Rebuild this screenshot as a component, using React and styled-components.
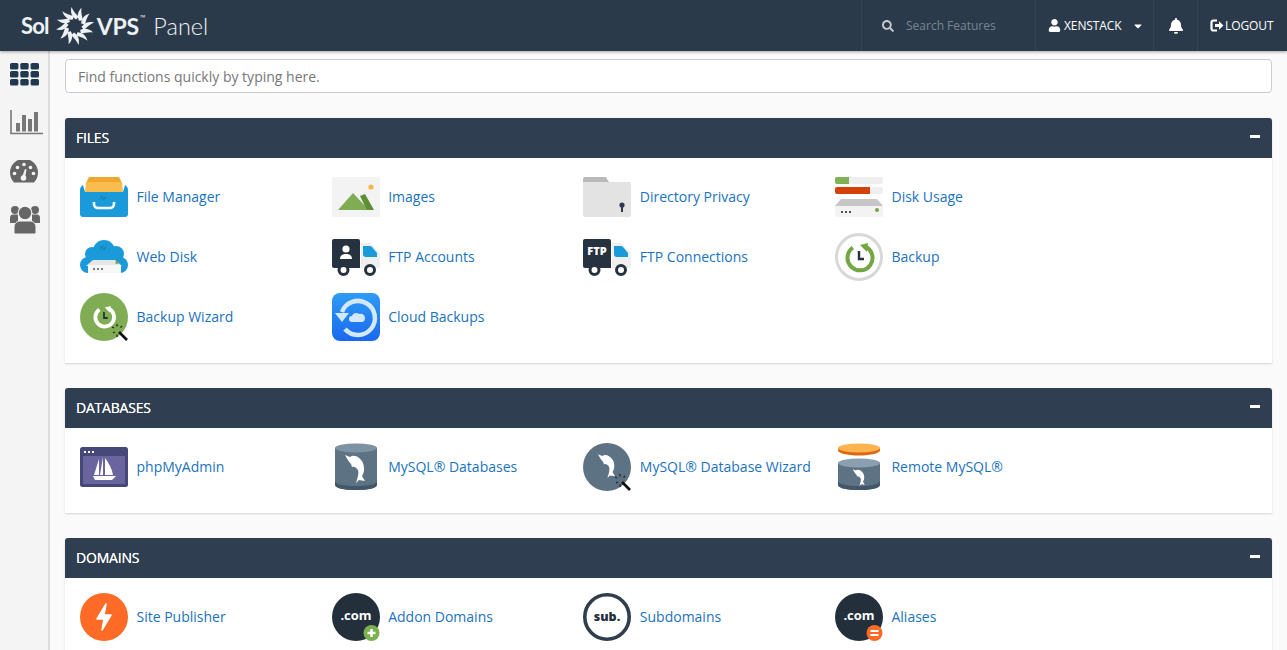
import React from 'react'
import styled, { createGlobalStyle } from 'styled-components'
import { FaSearch, FaUser, FaBell, FaCaretDown } from 'react-icons/fa'

const GlobalStyle = createGlobalStyle`
  html, body {
    margin: 0;
    height: 100%;
    overflow: hidden;
    background: #fafafa;
    font-family: 'Open Sans', 'Liberation Sans', sans-serif;
  }
`
const Page = styled.div`
  height: 100vh;
  display: flex;
  flex-direction: column;
  overflow: hidden;
`
const Header = styled.header`
  flex: 0 0 51px;
  height: 51px;
  box-sizing: border-box;
  display: flex;
  align-items: stretch;
  background: #2b3a4b;
  box-shadow: 0 1px 3px rgba(0, 0, 0, 0.35);
  z-index: 2;
  color: #fff;
`
const Logo = styled.div`
  flex: 1;
  display: flex;
  align-items: center;
  padding-left: 21px;
  color: #eef1f3;
`
const LogoWord = styled.span`
  font-family: 'Lato', sans-serif;
  font-weight: 700;
  font-size: ${(p) => p.$size || 22}px;
  letter-spacing: ${(p) => p.$track || 0}px;
`
const LogoTm = styled.sup`
  font-size: 7px;
  align-self: flex-start;
  margin: 14px 0 0 1px;
  line-height: 1;
`
const LogoPanel = styled.span`
  font-family: 'Lato', sans-serif;
  font-weight: 300;
  font-size: 23.5px;
  margin-left: 8px;
`
const HeaderCell = styled.div`
  width: ${(p) => p.$w}px;
  box-sizing: border-box;
  display: flex;
  align-items: center;
  padding-left: ${(p) => p.$pad}px;
  border-left: 1px solid #334355;
  font-size: 12px;
  letter-spacing: -0.1px;
`
const SearchText = styled.span`
  margin-left: 12px;
  font-size: 12px;
  letter-spacing: 0;
  color: #78858f;
`
const Caret = styled(FaCaretDown)`
  margin-left: 10px;
  font-size: 12px;
`
const Body = styled.div`
  flex: 1;
  display: flex;
  min-height: 0;
`
const Sidebar = styled.nav`
  flex: 0 0 50px;
  box-sizing: border-box;
  background: #f4f4f4;
  border-right: 2px solid #dcdcdc;
  display: flex;
  flex-direction: column;
`
const SideItem = styled.div`
  height: ${(p) => p.$h || 49}px;
  display: flex;
  align-items: center;
  padding-left: 10px;
`
const Main = styled.main`
  flex: 1;
  min-width: 0;
  padding: 8px 15px 0;
  background: #fafafa;
`
const QuickFind = styled.input`
  display: block;
  width: 100%;
  height: 34px;
  box-sizing: border-box;
  padding: 0 12px;
  border: 1px solid #ccc;
  border-radius: 4px;
  background: #fff;
  font-family: inherit;
  font-size: 14px;
  &::placeholder {
    color: #777;
    opacity: 1;
  }
`
const Panel = styled.section`
  margin-top: 25px;
  background: #fff;
  border-radius: 3px 3px 0 0;
  box-shadow: 0 1px 2px rgba(0, 0, 0, 0.15);
`
const PanelHead = styled.div`
  height: 40px;
  box-sizing: border-box;
  display: flex;
  align-items: center;
  justify-content: space-between;
  padding: 0 12px 2px 11px;
  background: #2f3e50;
  border-radius: 3px 3px 0 0;
  color: #fff;
  font-size: 14px;
  text-shadow: 0 0 0.6px #fff;
  letter-spacing: -0.2px;
  text-transform: uppercase;
`
const Collapse = styled.span`
  width: 10px;
  height: 3px;
  margin-bottom: 2px;
  background: #fff;
`
const PanelBody = styled.div`
  display: grid;
  grid-template-columns: repeat(4, 251.67px);
  grid-auto-rows: 60px;
  padding: 9px 15px 16px;
`
const Item = styled.a`
  display: flex;
  align-items: center;
  gap: 8.5px;
  color: #1b72be;
  font-size: 14px;
  white-space: nowrap;
`
const ItemLabel = styled.span`
  padding-bottom: 2px;
`
const Icon = styled.svg`
  flex: 0 0 48px;
  width: 48px;
  height: 48px;
`

const Swirl = () => (
  <svg width="40" height="38" viewBox="-20 -19 40 38" style={{ margin: '0 2px 0 6px' }}>
    {Array.from({ length: 12 }).map((_, i) => (
      <path
        key={i}
        d="M1 -6.500 C-3 -9 -5 -13.500 -3.500 -19 C-2 -15 1 -12 4 -9 C3 -8.400 2 -7.500 1 -6.500 Z"
        fill="#eef1f3"
        transform={`rotate(${i * 30})`}
      />
    ))}
  </svg>
)

const LogoutGlyph = () => (
  <svg width="14" height="13" viewBox="0 0 14 13" style={{ marginRight: 1 }}>
    <path d="M7 1.500H3.500A2 2 0 0 0 1.500 3.500v6a2 2 0 0 0 2 2H7" fill="none" stroke="#fff" strokeWidth="2.200" />
    <path d="M5 5h4V2.200l4.500 4.300L9 10.800V8H5z" fill="#fff" />
  </svg>
)

const GridGlyph = () => (
  <svg width="29" height="23" viewBox="0 0 29 23">
    {[0, 1, 2].map((r) =>
      [0, 1, 2].map((c) => (
        <rect key={`${r}${c}`} x={c * 10.3} y={r * 8} width="8.4" height="6.6" rx="1.6" fill="#22384f" />
      )),
    )}
  </svg>
)

const ChartGlyph = () => (
  <svg width="33" height="25" viewBox="0 0 33 25">
    <path d="M1 0v23.500h32" fill="none" stroke="#777" strokeWidth="1.600" />
    <rect x="6" y="13" width="4" height="8.500" fill="#777" />
    <rect x="12" y="5" width="4" height="16.500" fill="#777" />
    <rect x="18" y="9" width="4" height="12.500" fill="#777" />
    <rect x="24" y="2" width="4" height="19.500" fill="#777" />
  </svg>
)

const GaugeGlyph = () => (
  <svg width="28" height="23" viewBox="0 0 28 23">
    <path d="M4 22.500A14 14 0 1 1 24 22.500z" fill="#666" />
    {[
      [4.5, 13.5],
      [7.5, 7.5],
      [14, 4.5],
      [20.5, 7.5],
      [23.5, 13.5],
    ].map(([cx, cy]) => (
      <circle key={cx} cx={cx} cy={cy} r="1.8" fill="#f4f4f4" />
    ))}
    <path d="M12 17l3-8 1.500 .5-1.500 9z" fill="#f4f4f4" />
    <circle cx="13.500" cy="18" r="2.800" fill="#f4f4f4" />
  </svg>
)

const UsersGlyph = () => (
  <svg width="30" height="29" viewBox="0 0 30 29">
    <circle cx="5" cy="5" r="4" fill="#666" />
    <circle cx="25" cy="5" r="4" fill="#666" />
    <path d="M0 18v-5c0-2 1-3.500 3-3.500h5v8.500z" fill="#666" />
    <path d="M30 18v-5c0-2-1-3.500-3-3.500h-5v8.500z" fill="#666" />
    <circle cx="15" cy="8" r="6.800" fill="#666" stroke="#f4f4f4" strokeWidth="1.200" />
    <path d="M4 28v-6c0-3.500 3-6 6-6h10c3 0 6 2.500 6 6v6a1 1 0 0 1-1 1H5a1 1 0 0 1-1-1z" fill="#666" stroke="#f4f4f4" strokeWidth="1" />
  </svg>
)

const Dolphin = ({ transform }) => (
  <path
    transform={transform}
    fill="#fff"
    d="M13 12 L18 14 C22 11 28 14 31 20 C33 26 32 30 30 33 L33 38 L27 37 L24 40 C26 34 27 30 26 27 C24 24 22 23 20 24 L19 21 C17 19 15 16 13 12 Z"
  />
)

const Wand = () => (
  <g>
    <path d="M39 39 L47 47" stroke="#111" strokeWidth="2.600" />
    <path d="M32 34l2 1M37 31v2.500M42 33l-1.500 1.500M33 40l2-1M37 44v-2.500" stroke="#222" strokeWidth="1.300" />
  </g>
)

const Truck = ({ children }) => (
  <>
    <path d="M29 10h9l8 8c2 2 2 4 2 7v8a2 2 0 0 1-2 2H29z" fill="#efefef" />
    <path d="M31 13h7a3 3 0 0 1 2 1l5 6v4H34a3 3 0 0 1-3-3z" fill="#1a9ad8" />
    <path d="M2 6h24a2 2 0 0 1 2 2v27H2a2 2 0 0 1-2-2V8a2 2 0 0 1 2-2z" fill="#26323f" />
    <circle cx="11.500" cy="37" r="4.500" fill="#fff" stroke="#26323f" strokeWidth="3" />
    <circle cx="38" cy="37" r="4.500" fill="#fff" stroke="#26323f" strokeWidth="3" />
    {children}
  </>
)

const ComIcon = ({ color, mark }) => (
  <Icon viewBox="0 0 48 48">
    <circle cx="24" cy="24" r="24" fill="#232f3b" />
    <text x="24" y="27" textAnchor="middle" fontFamily="Open Sans" fontWeight="700" fontSize="13" fill="#fff">
      .com
    </text>
    <circle cx="39.500" cy="40" r="8" fill={color} />
    {mark}
  </Icon>
)

const FileManagerIcon = () => (
  <Icon viewBox="0 0 48 48">
    <path d="M9 4h30l3 6H6z" fill="#f0a72e" />
    <path d="M6 9h36l1 11H5z" fill="#f8bc4f" />
    <path d="M0 17c0-2 1-4 3-5l2 7h38l2-7c2 1 3 3 3 5v24a3 3 0 0 1-3 3H3a3 3 0 0 1-3-3z" fill="#1a9ad8" />
    <path d="M14 29v2a4 4 0 0 0 4 4h12a4 4 0 0 0 4-4v-2" fill="none" stroke="#fff" strokeWidth="2.600" />
    <path d="M20 26l3-3M23 27l3-3" stroke="#1587be" strokeWidth="2" />
  </Icon>
)
const ImagesIcon = () => (
  <Icon viewBox="0 0 48 48">
    <rect y="4" width="48" height="40" rx="1.500" fill="#f3f3f3" />
    <circle cx="39" cy="14" r="2.600" fill="#f7b54a" />
    <path d="M6 37L21 20l16 17z" fill="#80ad53" />
    <path d="M28 23l5-2 9 16h-7z" fill="#5f8f34" />
  </Icon>
)
const DirectoryIcon = () => (
  <Icon viewBox="0 0 48 48">
    <path d="M0 6a2 2 0 0 1 2-2h21l4 7H0z" fill="#b9b9b9" />
    <path d="M0 9h46a2 2 0 0 1 2 2v31a2 2 0 0 1-2 2H2a2 2 0 0 1-2-2z" fill="#e3e3e3" />
    <circle cx="39" cy="32" r="2.600" fill="#2b3a4b" />
    <rect x="38" y="32" width="2" height="7" fill="#2b3a4b" />
  </Icon>
)
const DiskUsageIcon = () => (
  <Icon viewBox="0 0 48 48">
    <rect y="4" width="48" height="7" rx="2" fill="#efefef" />
    <path d="M2 4h12v7H2a2 2 0 0 1-2-2V6a2 2 0 0 1 2-2z" fill="#80b254" />
    <rect y="14" width="48" height="7" rx="2" fill="#efefef" />
    <path d="M2 14h33v7H2a2 2 0 0 1-2-2v-3a2 2 0 0 1 2-2z" fill="#d4420c" />
    <path d="M6 26h36l6 7H0z" fill="#c6c6c6" />
    <path d="M0 33h48v9a2 2 0 0 1-2 2H2a2 2 0 0 1-2-2z" fill="#f3f3f3" />
    <circle cx="42" cy="37" r="2" fill="#73a644" />
    <path d="M6 39h2M10 39h2M14 39h2" stroke="#4a5560" strokeWidth="2" />
  </Icon>
)
const WebDiskIcon = () => (
  <Icon viewBox="0 0 48 48">
    <g fill="#1a9ad8">
      <circle cx="24" cy="18" r="11" />
      <circle cx="12" cy="21" r="7" />
      <circle cx="36" cy="21" r="8" />
      <circle cx="8" cy="32" r="8" />
      <circle cx="40" cy="32" r="8" />
      <rect x="8" y="20" width="32" height="20" />
    </g>
    <path d="M13 27h22l7 6H6z" fill="#e6e6e6" />
    <rect x="8" y="32" width="33" height="8" fill="#f7f7f7" />
    <circle cx="37" cy="29.500" r="1.600" fill="#73a644" />
    <path d="M13 36h2M17 36h2M21 36h2" stroke="#4a5560" strokeWidth="1.600" />
    <path d="M20 16l3-3M23 17l3-3" stroke="#1587be" strokeWidth="2" />
  </Icon>
)
const FtpAccountsIcon = () => (
  <Icon viewBox="0 0 48 48">
    <Truck>
      <circle cx="14" cy="16" r="3.600" fill="#fff" />
      <path d="M8 26c0-4 3-5 6-5s6 1 6 5z" fill="#fff" />
    </Truck>
  </Icon>
)
const FtpConnectionsIcon = () => (
  <Icon viewBox="0 0 48 48">
    <Truck>
      <text x="14" y="22" textAnchor="middle" fontFamily="Open Sans" fontWeight="800" fontSize="11" fill="#fff">
        FTP
      </text>
    </Truck>
  </Icon>
)
const ClockArrow = ({ color, hand, weight = 4 }) => (
  <>
    <path d="M31 14a12.500 12.500 0 1 1-12 0" fill="none" stroke={color} strokeWidth={weight} transform="rotate(-6 24 25)" />
    <path d="M25 12l8-2-1 9z" fill={color} />
    <path d="M24 18v8h5" fill="none" stroke={hand} strokeWidth="2.400" />
  </>
)
const BackupIcon = () => (
  <Icon viewBox="0 0 48 48">
    <circle cx="24" cy="24" r="22.500" fill="#fff" stroke="#d8d8d8" strokeWidth="3" />
    <ClockArrow color="#73a644" hand="#26323f" />
  </Icon>
)
const BackupWizardIcon = () => (
  <Icon viewBox="0 0 48 48">
    <circle cx="24" cy="24" r="24" fill="#80ad53" />
    <g transform="translate(6 5.500) scale(0.75)">
      <ClockArrow color="#fff" hand="#26323f" weight={5} />
    </g>
    <Wand />
  </Icon>
)
const CloudBackupsIcon = () => (
  <Icon viewBox="0 0 48 48">
    <defs>
      <linearGradient id="cloudBg" x1="0" y1="0" x2="0" y2="1">
        <stop offset="0" stopColor="#2f9cf5" />
        <stop offset="1" stopColor="#1a68ee" />
      </linearGradient>
    </defs>
    <rect width="48" height="48" rx="8" fill="url(#cloudBg)" />
    <path d="M10 19A17 17 0 1 1 13 36" fill="none" stroke="#d4e8fb" strokeWidth="4.500" />
    <path d="M3 20h14l-7 9z" fill="#d4e8fb" />
    <path d="M20 29a3 3 0 0 1 0-6c1-3 5-4 7-2 3-1 6 1 6 4s-2 4-3 4z" fill="#d4e8fb" />
  </Icon>
)
const PhpMyAdminIcon = () => (
  <Icon viewBox="0 0 48 48">
    <rect width="48" height="40" y="4" rx="2.500" fill="#47487a" />
    <rect x="3" y="13" width="42" height="28" rx="1" fill="#6b659f" />
    <path d="M4 9h2M8 9h2M12 9h2" stroke="#fff" strokeWidth="2" />
    <path d="M19 16v16h-5zM23 14v18h-3zM25 15c4 5 7 11 8 17h-8z" fill="#fff" />
    <path d="M13 33h23l-4 4H15z" fill="#fff" />
  </Icon>
)
const MysqlIcon = () => (
  <Icon viewBox="0 0 48 48">
    <path d="M3 5h42v37c0 3-9 5-21 5S3 45 3 42z" fill="#5d7283" />
    <path d="M3 38c0 3 9 5 21 5s21-2 21-5v4c0 3-9 5-21 5S3 45 3 42z" fill="#42586a" />
    <ellipse cx="24" cy="5" rx="21" ry="4.500" fill="#7d93a4" />
    <Dolphin />
  </Icon>
)
const MysqlWizardIcon = () => (
  <Icon viewBox="0 0 48 48">
    <circle cx="24" cy="24" r="24" fill="#5d7283" />
    <Dolphin transform="translate(4 1) scale(0.85)" />
    <Wand />
  </Icon>
)
const RemoteMysqlIcon = () => (
  <Icon viewBox="0 0 48 48">
    <path d="M3 5v2.500c0 2.500 9 5 21 5s21-2.500 21-5V5z" fill="#e0660f" />
    <ellipse cx="24" cy="5" rx="21" ry="4.500" fill="#fbb450" />
    <path d="M3 20h42v22c0 3-9 5-21 5S3 45 3 42z" fill="#5d7283" />
    <path d="M3 38c0 3 9 5 21 5s21-2 21-5v4c0 3-9 5-21 5S3 45 3 42z" fill="#42586a" />
    <ellipse cx="24" cy="20" rx="21" ry="4.500" fill="#8aa0b0" />
    <Dolphin transform="translate(10 19) scale(0.6)" />
  </Icon>
)
const SitePublisherIcon = () => (
  <Icon viewBox="0 0 48 48">
    <circle cx="24" cy="24" r="24" fill="#fd6b26" />
    <path d="M26 11L17 26h7l-2 11 9-15h-7z" fill="#fff" stroke="#fff" strokeWidth="1.500" strokeLinejoin="round" />
  </Icon>
)
const AddonIcon = () => (
  <ComIcon
    color="#7bb04e"
    mark={<path d="M39.500 36v8M35.500 40h8" stroke="#fff" strokeWidth="2.400" />}
  />
)
const SubIcon = () => (
  <Icon viewBox="0 0 48 48">
    <circle cx="24" cy="24" r="22.200" fill="#fff" stroke="#2f3e4c" strokeWidth="3.600" />
    <text x="24" y="28" textAnchor="middle" fontFamily="Open Sans" fontWeight="800" fontSize="12.500" fill="#232f3b">
      sub.
    </text>
  </Icon>
)
const AliasIcon = () => (
  <ComIcon
    color="#fd6b26"
    mark={<path d="M35.500 38h8M35.500 42h8" stroke="#fff" strokeWidth="2.200" />}
  />
)

const sections = [
  {
    title: 'Files',
    items: [
      ['File Manager', FileManagerIcon],
      ['Images', ImagesIcon],
      ['Directory Privacy', DirectoryIcon],
      ['Disk Usage', DiskUsageIcon],
      ['Web Disk', WebDiskIcon],
      ['FTP Accounts', FtpAccountsIcon],
      ['FTP Connections', FtpConnectionsIcon],
      ['Backup', BackupIcon],
      ['Backup Wizard', BackupWizardIcon],
      ['Cloud Backups', CloudBackupsIcon],
    ],
  },
  {
    title: 'Databases',
    items: [
      ['phpMyAdmin', PhpMyAdminIcon],
      ['MySQL® Databases', MysqlIcon],
      ['MySQL® Database Wizard', MysqlWizardIcon],
      ['Remote MySQL®', RemoteMysqlIcon],
    ],
  },
  {
    title: 'Domains',
    items: [
      ['Site Publisher', SitePublisherIcon],
      ['Addon Domains', AddonIcon],
      ['Subdomains', SubIcon],
      ['Aliases', AliasIcon],
    ],
  },
]

const App = () => {
  return (
    <Page>
      <GlobalStyle />
      <Header>
        <Logo>
          <LogoWord $track={-0.8}>Sol</LogoWord>
          <Swirl />
          <LogoWord $size={23} $track={-0.2}>VPS</LogoWord>
          <LogoTm>™</LogoTm>
          <LogoPanel>Panel</LogoPanel>
        </Logo>
        <HeaderCell $w={174} $pad={20}>
          <FaSearch size={12} color="#c3cad0" />
          <SearchText>Search Features</SearchText>
        </HeaderCell>
        <HeaderCell $w={118} $pad={12}>
          <FaUser size={13} style={{ marginRight: 3 }} />
          XENSTACK
          <Caret />
        </HeaderCell>
        <HeaderCell $w={44} $pad={14}>
          <FaBell size={16} />
        </HeaderCell>
        <HeaderCell $w={90} $pad={12}>
          <LogoutGlyph />
          LOGOUT
        </HeaderCell>
      </Header>
      <Body>
        <Sidebar>
          <SideItem $h={47}><GridGlyph /></SideItem>
          <SideItem><ChartGlyph /></SideItem>
          <SideItem><GaugeGlyph /></SideItem>
          <SideItem $h={46}><UsersGlyph /></SideItem>
        </Sidebar>
        <Main>
          <QuickFind placeholder="Find functions quickly by typing here." />
          {sections.map((s) => (
            <Panel key={s.title}>
              <PanelHead>
                {s.title}
                <Collapse />
              </PanelHead>
              <PanelBody>
                {s.items.map(([label, Glyph]) => (
                  <Item key={label}>
                    <Glyph />
                    <ItemLabel>{label}</ItemLabel>
                  </Item>
                ))}
              </PanelBody>
            </Panel>
          ))}
        </Main>
      </Body>
    </Page>
  )
}

export default App
